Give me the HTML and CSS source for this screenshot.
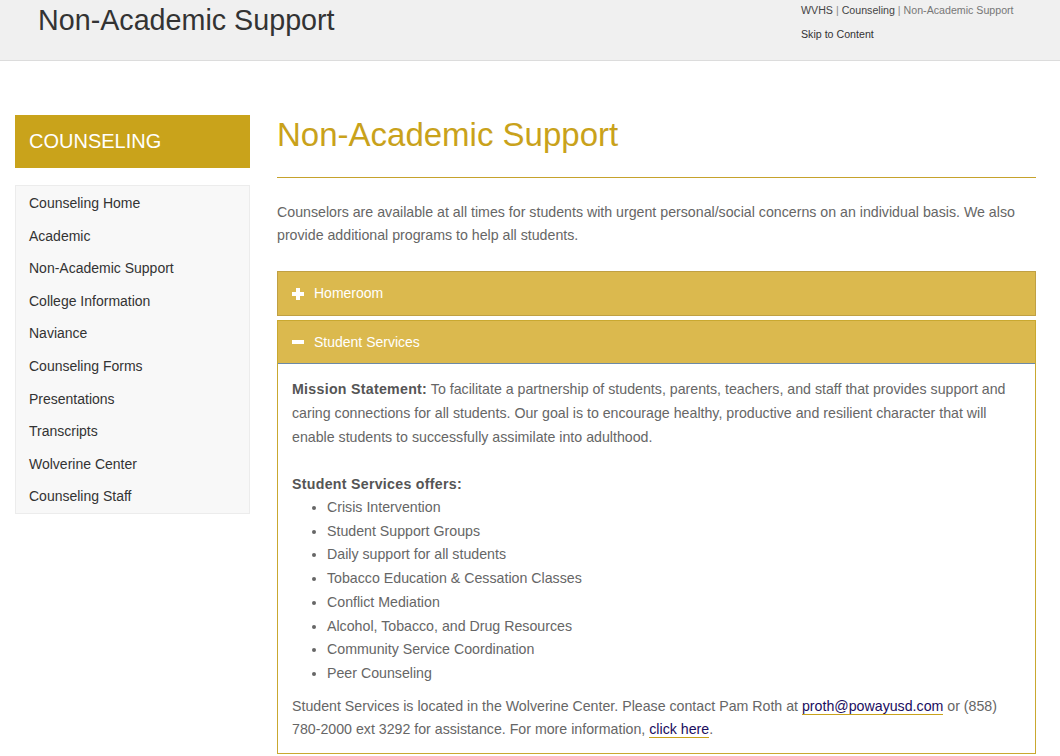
FILE: index.html
```html
<!DOCTYPE html>
<html>
<head>
<meta charset="utf-8">
<link rel="stylesheet" href="styles.css">
</head>
<body>
<header class="site-header">
  <div class="site-title">Non-Academic Support</div>
  <div class="header-right">
    <div class="crumbs"><a href="#">WVHS</a> | <a href="#">Counseling</a> | <span class="current">Non-Academic Support</span></div>
    <div class="skip"><a href="#">Skip to Content</a></div>
  </div>
</header>
<div class="layout">
  <aside class="sidebar">
    <div class="side-title">COUNSELING</div>
    <ul class="side-nav">
      <li><a href="#">Counseling Home</a></li>
      <li><a href="#">Academic</a></li>
      <li><a href="#">Non-Academic Support</a></li>
      <li><a href="#">College Information</a></li>
      <li><a href="#">Naviance</a></li>
      <li><a href="#">Counseling Forms</a></li>
      <li><a href="#">Presentations</a></li>
      <li><a href="#">Transcripts</a></li>
      <li><a href="#">Wolverine Center</a></li>
      <li><a href="#">Counseling Staff</a></li>
    </ul>
  </aside>
  <main class="main">
    <h1 class="page-title">Non-Academic Support</h1>
    <p class="intro">Counselors are available at all times for students with urgent personal/social concerns on an individual basis. We also provide additional programs to help all students.</p>
    <div class="panel">
      <div class="panel-head"><span class="icon-plus"></span>Homeroom</div>
    </div>
    <div class="panel open">
      <div class="panel-head"><span class="icon-minus"></span>Student Services</div>
      <div class="panel-body">
        <p class="mission"><strong>Mission Statement:</strong> To facilitate a partnership of students, parents, teachers, and staff that provides support and caring connections for all students. Our goal is to encourage healthy, productive and resilient character that will enable students to successfully assimilate into adulthood.</p>
        <p class="offers"><strong>Student Services offers:</strong></p>
        <ul class="services">
          <li>Crisis Intervention</li>
          <li>Student Support Groups</li>
          <li>Daily support for all students</li>
          <li>Tobacco Education &amp; Cessation Classes</li>
          <li>Conflict Mediation</li>
          <li>Alcohol, Tobacco, and Drug Resources</li>
          <li>Community Service Coordination</li>
          <li>Peer Counseling</li>
        </ul>
        <p class="contact">Student Services is located in the Wolverine Center. Please contact Pam Roth at <a href="#">proth@powayusd.com</a> or (858) 780-2000 ext 3292 for assistance. For more information, <a href="#">click here</a>.</p>
      </div>
    </div>
  </main>
</div>
</body>
</html>
```
FILE: styles.css
```css
* { box-sizing: border-box; }
html, body { margin: 0; padding: 0; }
body {
  font-family: "Liberation Sans", Arial, sans-serif;
  background: #fff;
  color: #666;
  width: 1060px;
  overflow: hidden;
}
a { text-decoration: none; color: inherit; }

.site-header {
  height: 61px;
  background: #f0f0f0;
  border-bottom: 1px solid #dcdcdc;
  display: flex;
  justify-content: space-between;
}
.site-title {
  font-size: 28.7px;
  color: #333;
  padding: 3px 0 0 38px;
  line-height: 34px;
}
.header-right {
  width: 259px;
  padding-top: 3px;
  font-size: 10.65px;
  color: #555;
}
.crumbs { line-height: 15px; color: #888; }
.crumbs a { color: #444; }
.crumbs .current { color: #777; }
.skip { line-height: 15px; margin-top: 9px; color: #333; }

.layout {
  display: flex;
  padding: 54px 0 0 15px;
  gap: 27px;
}
.sidebar { width: 235px; flex: none; }
.side-title {
  background: #c9a31b;
  color: #fff;
  font-size: 20px;
  height: 53px;
  line-height: 52px;
  padding-left: 14px;
}
.side-nav {
  list-style: none;
  margin: 17px 0 0;
  padding: 1px 0 0;
  background: #f8f8f8;
  border: 1px solid #ececec;
}
.side-nav li {
  font-size: 14px;
  line-height: 32.6px;
  padding-left: 13px;
  color: #333;
}

.main { width: 759px; flex: none; }
.page-title {
  margin: 0;
  font-weight: normal;
  font-size: 33px;
  color: #c9a21b;
  line-height: 38px;
  padding-top: 1px;
  padding-bottom: 23px;
  border-bottom: 1px solid #c6a22c;
}
.intro {
  margin: 23px 0 24px;
  font-size: 14.2px;
  line-height: 23px;
  color: #666;
}
.panel {
  border: 1px solid #c0a043;
  margin-bottom: 4px;
}
.panel-head {
  background: #dbb94e;
  color: #fff;
  font-size: 14px;
  height: 43px;
  line-height: 43px;
  padding-left: 14px;
  display: flex;
  align-items: center;
}
.panel.open { border-color: #c9a830; }
.panel.open .panel-head { border-bottom: 1px solid #6d8aa6; height: 43px; }
.icon-plus, .icon-minus {
  position: relative;
  width: 12px;
  height: 12px;
  margin-right: 10px;
  display: inline-block;
}
.icon-plus::before, .icon-minus::before {
  content: "";
  position: absolute;
  left: 0; right: 0; top: 4px;
  height: 4px;
  background: #fff;
}
.icon-plus::after {
  content: "";
  position: absolute;
  top: 0; bottom: 0; left: 4px;
  width: 4px;
  background: #fff;
}
.panel-body {
  padding: 13px 14px 12px;
  font-size: 14.2px;
  line-height: 24px;
  color: #666;
}
.panel-body p { margin: 0; }
.panel-body strong { color: #555; letter-spacing: 0.28px; }
.mission { margin-bottom: 23px !important; }
.offers { line-height: 24px; }
.services {
  margin: 0 0 9px;
  padding-left: 35px;
}
.services li { line-height: 23.7px; }
.contact { line-height: 23px; }
.contact a {
  color: #1a0d5e;
  border-bottom: 1px solid #c9a21b;
}
```
